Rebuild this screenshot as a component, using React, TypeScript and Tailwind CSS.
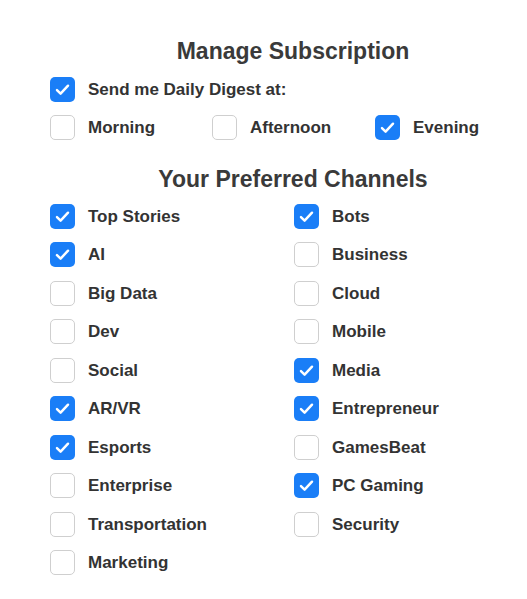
import React from "react";

type Item = { label: string; checked?: boolean };

const Box = ({ checked }: { checked?: boolean }) =>
  checked ? (
    <span className="flex h-[25px] w-[25px] shrink-0 items-center justify-center rounded-[5px] bg-[#1a7ef7]">
      <svg width="17" height="17" viewBox="0 0 16 16" fill="none">
        <path
          d="M2.8 8.6l3.4 3.3L13.2 4.4"
          stroke="#fff"
          strokeWidth="2.3"
          strokeLinecap="round"
          strokeLinejoin="round"
        />
      </svg>
    </span>
  ) : (
    <span className="h-[25px] w-[25px] shrink-0 rounded-[5px] border border-[#cfcfcf] bg-white" />
  );

const Option = ({ label, checked }: Item) => (
  <div className="flex h-[38.5px] items-center gap-[13px]">
    <Box checked={checked} />
    <span>{label}</span>
  </div>
);

const left: Item[] = [
  { label: "Top Stories", checked: true },
  { label: "AI", checked: true },
  { label: "Big Data" },
  { label: "Dev" },
  { label: "Social" },
  { label: "AR/VR", checked: true },
  { label: "Esports", checked: true },
  { label: "Enterprise" },
  { label: "Transportation" },
  { label: "Marketing" },
];

const right: Item[] = [
  { label: "Bots", checked: true },
  { label: "Business" },
  { label: "Cloud" },
  { label: "Mobile" },
  { label: "Media", checked: true },
  { label: "Entrepreneur", checked: true },
  { label: "GamesBeat" },
  { label: "PC Gaming", checked: true },
  { label: "Security" },
];

export default function App() {
  return (
    <div
      className="min-h-[599px] w-[527px] overflow-hidden bg-white pl-[50px] pt-[37px] text-[17px] font-bold text-[#333]"
      style={{ fontFamily: '"Liberation Sans", Arial, sans-serif' }}
    >
      <h2 className="mb-[5px] pl-[9px] text-center text-[23px] leading-[28px] text-[#3a3a3a]">
        Manage Subscription
      </h2>
      <Option label="Send me Daily Digest at:" checked />
      <div className="grid grid-cols-[162px_163px_1fr]">
        <Option label="Morning" />
        <Option label="Afternoon" />
        <Option label="Evening" checked />
      </div>

      <h2 className="mb-[4px] mt-[18px] pl-[9px] text-center text-[23px] leading-[28px] text-[#3a3a3a]">
        Your Preferred Channels
      </h2>
      <div className="grid grid-cols-[244px_1fr]">
        <div className="flex flex-col">
          {left.map((i) => (
            <Option key={i.label} {...i} />
          ))}
        </div>
        <div className="flex flex-col">
          {right.map((i) => (
            <Option key={i.label} {...i} />
          ))}
        </div>
      </div>
    </div>
  );
}
